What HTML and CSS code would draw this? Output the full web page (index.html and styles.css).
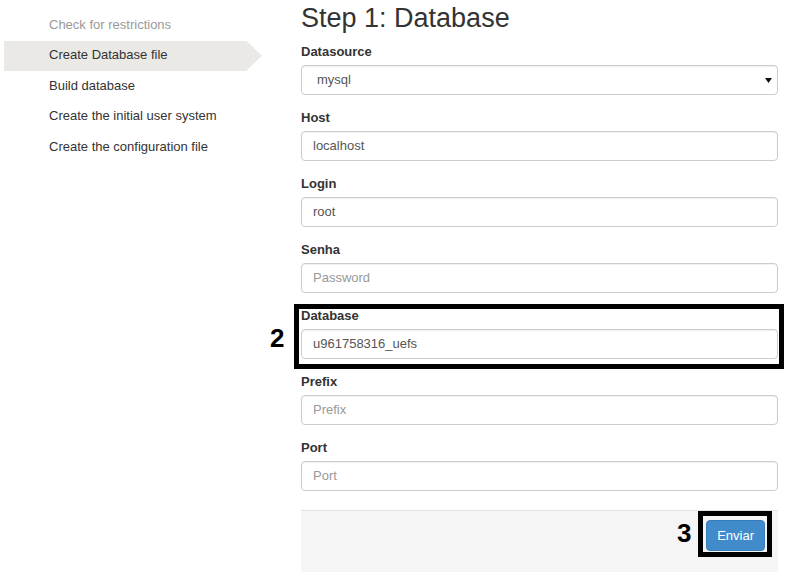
FILE: index.html
```html
<!DOCTYPE html>
<html lang="pt">
<head>
<meta charset="utf-8">
<title>Step 1: Database</title>
<link rel="stylesheet" href="styles.css">
</head>
<body>
<div class="page">
  <aside class="sidebar">
    <ul class="steps">
      <li class="step done">Check for restrictions</li>
      <li class="step active">Create Database file</li>
      <li class="step">Build database</li>
      <li class="step">Create the initial user system</li>
      <li class="step">Create the configuration file</li>
    </ul>
  </aside>
  <main class="content">
    <h2 class="title">Step 1: Database</h2>
    <form class="form">
      <div class="group">
        <label class="label">Datasource</label>
        <select class="control select"><option>mysql</option></select>
      </div>
      <div class="group">
        <label class="label">Host</label>
        <input class="control" type="text" value="localhost">
      </div>
      <div class="group">
        <label class="label">Login</label>
        <input class="control" type="text" value="root">
      </div>
      <div class="group">
        <label class="label">Senha</label>
        <input class="control" type="password" placeholder="Password">
      </div>
      <div class="group">
        <label class="label">Database</label>
        <input class="control" type="text" value="u961758316_uefs">
      </div>
      <div class="group">
        <label class="label">Prefix</label>
        <input class="control" type="text" placeholder="Prefix">
      </div>
      <div class="group">
        <label class="label">Port</label>
        <input class="control" type="text" placeholder="Port">
      </div>
      <div class="footer">
        <button class="btn" type="button">Enviar</button>
      </div>
    </form>
  </main>
  <div class="mark mark-box-2"></div>
  <div class="mark mark-num mark-num-2">2</div>
  <div class="mark mark-box-3"></div>
  <div class="mark mark-num mark-num-3">3</div>
</div>
</body>
</html>
```
FILE: styles.css
```css
* { box-sizing: border-box; }
html, body { margin: 0; padding: 0; background: #fff; }
body {
  font-family: "Liberation Sans", Arial, sans-serif;
  font-size: 13px;
  color: #333;
}
.page {
  position: relative;
  display: flex;
  width: 785px;
  min-height: 585px;
}
.sidebar {
  width: 301px;
  flex: none;
  padding: 10px 0 0 4px;
}
.steps { list-style: none; margin: 0; padding: 0; }
.step {
  width: 258px;
  height: 30.5px;
  padding: 5.5px 0 0 45px;
  line-height: 18px;
  color: #333;
}
.step.done { color: #999; }
.step.active {
  background: #ebe9e5;
  clip-path: polygon(0 0, calc(100% - 16px) 0, 100% 50%, calc(100% - 16px) 100%, 0 100%);
}
.content {
  width: 477px;
  flex: none;
}
.title {
  margin: 0 0 6px;
  font-size: 27px;
  font-weight: normal;
  line-height: 36px;
  color: #333;
}
.group { margin-bottom: 13px; }
.label {
  display: block;
  font-weight: bold;
  line-height: 18px;
  padding-top: 1px;
  margin-bottom: 4px;
  color: #333;
}
.control {
  display: block;
  width: 100%;
  height: 30px;
  padding: 0 11px 2px;
  border: 1px solid #ccc;
  border-radius: 4px;
  font-family: "Liberation Sans", Arial, sans-serif;
  font-size: 13px;
  color: #555;
  background: #fff;
  box-shadow: inset 0 1px 1px rgba(0,0,0,0.06);
}
.control::placeholder { color: #999; }
.select {
  -webkit-appearance: none;
  appearance: none;
  padding-left: 15px;
  background-image: url("data:image/svg+xml,%3Csvg xmlns='http://www.w3.org/2000/svg' width='7' height='5'%3E%3Cpath d='M0 0H7L3.5 5Z' fill='%23111'/%3E%3C/svg%3E");
  background-repeat: no-repeat;
  background-position: right 5px center;
}
.footer {
  margin-top: 19px;
  height: 62px;
  padding: 9px 13px 0 0;
  background: #f5f5f5;
  border-top: 1px solid #e3e3e3;
  border-radius: 0 0 3px 3px;
  display: flex;
  justify-content: flex-end;
  align-items: flex-start;
}
.btn {
  height: 31px;
  padding: 0 10px;
  border: 1px solid #357ebd;
  border-radius: 4px;
  background: #428bca;
  color: #fff;
  font-family: "Liberation Sans", Arial, sans-serif;
  font-size: 13px;
  line-height: 29px;
}
.mark { position: absolute; }
.mark-box-2 {
  left: 294px;
  top: 304px;
  width: 490px;
  height: 65px;
  border: 5px solid #000;
}
.mark-box-3 {
  left: 698px;
  top: 511px;
  width: 74px;
  height: 46px;
  border: 5px solid #000;
}
.mark-num {
  font-family: "Liberation Sans", Arial, sans-serif;
  font-weight: bold;
  font-size: 26px;
  line-height: 26px;
  color: #000;
}
.mark-num-2 { left: 270px; top: 325px; }
.mark-num-3 { left: 677px; top: 520px; }
```
